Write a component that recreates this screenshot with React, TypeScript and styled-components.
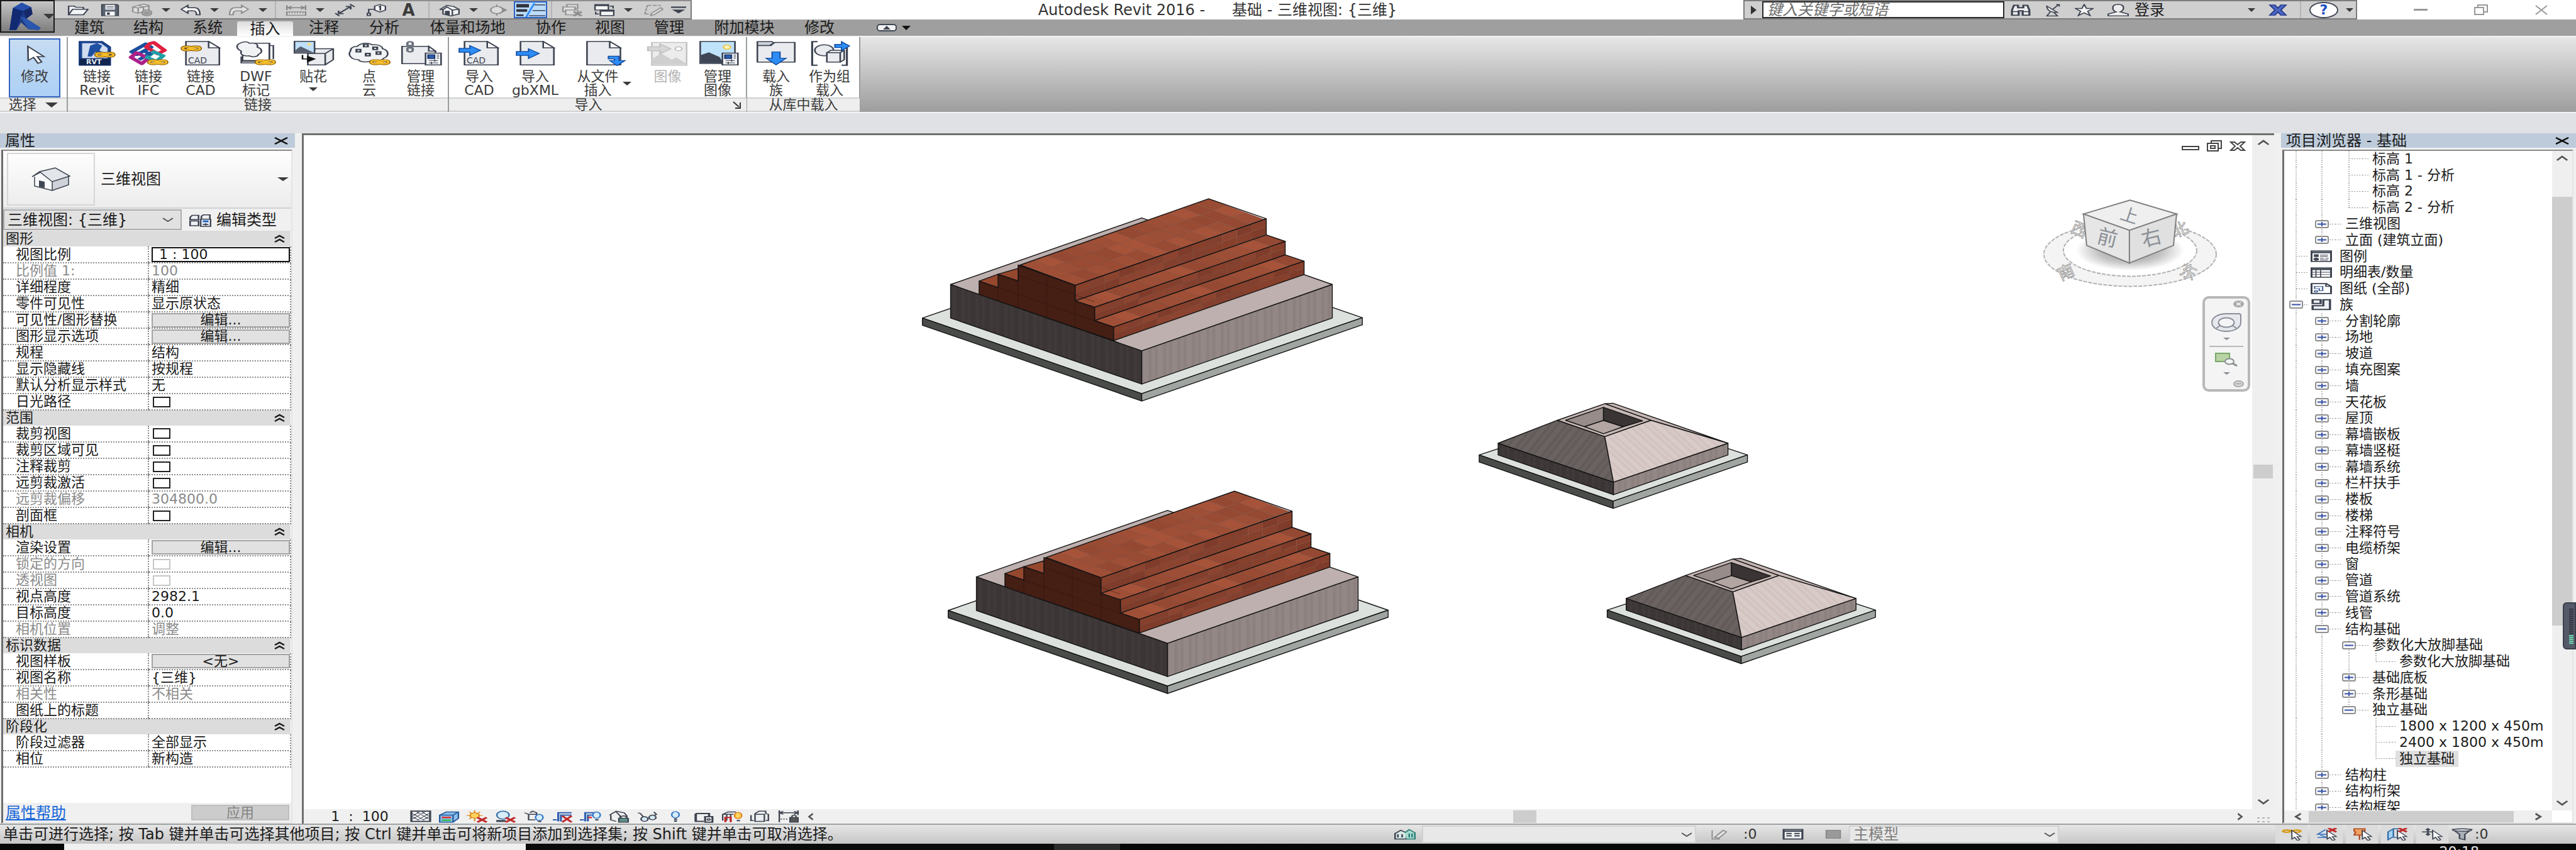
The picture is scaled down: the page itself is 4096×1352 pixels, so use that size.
import React from "react";
import styled, { createGlobalStyle, css } from "styled-components";

const Global = createGlobalStyle`
  * { box-sizing: border-box; }
  html, body { margin: 0; height: 100%; background: #f0f0f0; }
  body, button, input, select {
    font-family: "DejaVu Sans", "Noto Sans CJK SC", sans-serif;
    font-size: 22px;
    line-height: 24px;
    color: #1b1b1b;
  }
  button { border: 0; padding: 0; background: none; }
  svg { display: block; flex: none; }
`;

/* ---------- frame ---------- */

const Window = styled.div`
  display: grid;
  grid-template-rows: auto 121px 34px minmax(0, 1fr) 32px 10px;
  grid-template-columns: minmax(0, 1fr);
  height: 100vh;
  overflow: hidden;
  white-space: nowrap;
`;

const Header = styled.header`
  display: grid;
  grid-template-columns: 87px minmax(0, 1fr);
  grid-template-rows: 31px 26px;
  background: #9f9f9f;
`;

const AppButton = styled.button`
  grid-row: 1 / 3;
  height: 52px;
  display: flex;
  align-items: center;
  justify-content: space-between;
  padding: 0 5px 0 11px;
  border: 2px solid #1a1a1a;
  background: linear-gradient(#c4c4c4, #7d7d7d);
`;

const TitleRow = styled.div`
  display: flex;
  background: #fff;
`;

const QuickBar = styled.div`
  display: flex;
  align-items: stretch;
  flex: none;
  padding: 0 3px 0 11px;
  background: #cfcfcf;
  border-top: 2px solid #8e8e8e;
  border-bottom: 2px solid #7c7c7c;
  border-right: 2px solid #7c7c7c;
`;

const Tool = styled.button<{ $w?: number; $on?: boolean }>`
  display: flex;
  align-items: center;
  justify-content: center;
  flex: none;
  width: ${(p) => p.$w ?? 51}px;
  ${(p) => p.$on && css`background: #bcdcfb; border: 2px solid #2d62c4;`}
`;

const Letter = styled.span`
  font-size: 26px;
  font-weight: 700;
  color: #3b3b3b;
`;

const Divider = styled.span`
  flex: none;
  width: 14px;
  background: linear-gradient(#b4b4b4, #b4b4b4) center / 2px 100% no-repeat;
`;

const Title = styled.h1`
  flex: 1;
  margin: 0;
  display: flex;
  justify-content: center;
  align-items: center;
  gap: 43px;
  font-size: 24px;
  font-weight: 400;
  color: #333;
`;

const InfoBar = styled.div`
  display: flex;
  flex: none;
  background: #cfcfcf;
  border: 2px solid #7c7c7c;
`;

const Search = styled.input`
  width: 385px;
  padding: 0 6px;
  border: 2px solid #2a2a2a;
  background: #fff;
  font-style: italic;
  font-size: 24px;
  line-height: 20px;
  &::placeholder { color: #6d6d6d; opacity: 1; }
`;

const Login = styled.button`
  display: flex;
  align-items: center;
  gap: 9px;
  width: 228px;
  padding-left: 12px;
  font-size: 24px;
`;

const HelpDot = styled.span`
  display: flex;
  align-items: center;
  justify-content: center;
  width: 46px;
  height: 26px;
  border: 2px solid #444a58;
  border-radius: 50%;
  background: #fff;
  color: #1f4fbf;
  font-weight: 700;
`;

const WindowButtons = styled.div`
  display: flex;
  flex: none;
  padding: 0 7px 0 53px;
`;

const Tabs = styled.nav`
  display: flex;
  padding-left: 8px;
`;

const Tab = styled.button<{ $w: number; $on?: boolean }>`
  width: ${(p) => p.$w}px;
  line-height: 24px;
  font-size: 24px;
  ${(p) =>
    p.$on &&
    css`
      margin-top: 3px;
      line-height: 20px;
      background: linear-gradient(#dcdcdc, #fff);
      border-radius: 3px 3px 0 0;
    `}
`;

const TabFold = styled.button`
  display: flex;
  align-items: center;
  gap: 8px;
  margin-left: 44px;
`;

const Pill = styled.span`
  display: flex;
  align-items: center;
  justify-content: center;
  width: 32px;
  height: 12px;
  border: 2px solid #3f4654;
  border-radius: 5px;
  background: #f2f2f2;
`;

/* ---------- ribbon ---------- */

const Ribbon = styled.section`
  display: flex;
  border-top: 2px solid #f4f4f4;
  background: linear-gradient(#e6e6e6, #9d9d9d);
`;

const Panel = styled.div<{ $w: number }>`
  width: ${(p) => p.$w}px;
  display: grid;
  grid-template-rows: 96px 23px;
  flex: none;
  background: #fff;
  border-right: 2px solid #9a9d9d;
`;

const PanelBody = styled.div`
  display: flex;
  padding: 2px 4px 0 5px;
`;

const PanelTitle = styled.div`
  display: flex;
  align-items: center;
  justify-content: center;
  border-top: 2px solid #cfd2d1;
  border-bottom: 2px solid #cfd2d1;
  background: #eeeeee;
  color: #3b3b3b;
  line-height: 20px;
`;

const TitleText = styled.span`
  flex: 1;
  text-align: center;
`;

const Big = styled.button<{ $w: number; $dim?: boolean; $on?: boolean }>`
  width: ${(p) => p.$w}px;
  display: flex;
  flex: none;
  flex-direction: column;
  align-items: center;
  gap: 6px;
  padding-top: 4px;
  line-height: 22px;
  color: ${(p) => (p.$dim ? "#b4b4b4" : "#3b3b3b")};
  ${(p) =>
    p.$on &&
    css`
      margin-left: 9px;
      border: 2px solid #3464c0;
      background: linear-gradient(#c6dcf2, #acd0f5);
      padding-top: 2px;
    `}
`;

const BigLabel = styled.span`
  display: flex;
  flex-direction: column;
  align-items: center;
`;

const WithArrow = styled.span`
  display: flex;
  align-items: center;
  gap: 6px;
`;

const OptionsBar = styled.div`
  background: #dfe1e4;
  border-top: 2px solid #f3f3f3;
`;

/* ---------- work area ---------- */

const Work = styled.main`
  display: grid;
  grid-template-columns: 469px minmax(0, 1fr) 469px;
  gap: 11px;
  min-height: 0;
  background: #f0f0f0;
`;

const Palette = styled.section`
  display: flex;
  flex-direction: column;
  min-height: 0;
  min-width: 0;
`;

const PaletteHead = styled.header`
  display: flex;
  justify-content: space-between;
  align-items: center;
  height: 23px;
  flex: none;
  padding: 0 10px 0 8px;
  background: #bdcbda;
  font-size: 24px;
`;

const PaletteBox = styled.div`
  flex: 1;
  min-height: 0;
  display: flex;
  flex-direction: column;
  margin: 3px 4px 0 2px;
  border: 2px solid #8a8a8a;
  border-left: 3px solid #6c6c6c;
  border-right-color: #e4e4e4;
  border-bottom-color: #e4e4e4;
  background: #fff;
`;

const TypePicker = styled.button`
  display: flex;
  align-items: center;
  flex: none;
  gap: 9px;
  height: 92px;
  padding: 0 4px 0 6px;
  border-bottom: 2px solid #d0d2d4;
  background: linear-gradient(#fefefe, #ececec);
  text-align: left;
`;

const Thumb = styled.span`
  display: flex;
  align-items: center;
  justify-content: center;
  width: 140px;
  height: 84px;
  border: 2px solid #d4d6d8;
`;

const Grow = styled.span`
  flex: 1;
  font-size: 24px;
`;

const FilterRow = styled.div`
  display: flex;
  flex: none;
  height: 35px;
  padding: 1px 0;
  background: #f0f0f0;
`;

const Combo = styled.label<{ $w: number; $plain?: boolean }>`
  display: grid;
  grid-template-columns: minmax(0, 1fr) ${(p) => (p.$plain ? 26 : 40)}px;
  align-items: center;
  flex: none;
  width: ${(p) => p.$w}px;
  border: 2px solid ${(p) => (p.$plain ? "#d2d2d2" : "#acacac")};
  background: ${(p) => (p.$plain ? "#e8e8e8" : "#e1e1e1")};
  svg { grid-area: 1 / 2; justify-self: center; pointer-events: none; }
`;

const Select = styled.select<{ $dim?: boolean }>`
  grid-area: 1 / 1 / 2 / 3;
  width: 100%;
  height: 100%;
  min-width: 0;
  padding: 0 5px;
  border: 0;
  appearance: none;
  background: transparent;
  font-size: 24px;
  line-height: 24px;
  color: ${(p) => (p.$dim ? "#7d7d7d" : "#1b1b1b")};
`;

const EditType = styled.button`
  display: flex;
  align-items: center;
  gap: 8px;
  padding-left: 11px;
  font-size: 24px;
`;

const Props = styled.table`
  width: 100%;
  border-collapse: collapse;
  table-layout: fixed;
`;

const GroupRow = styled.tr`
  height: 25px;
  background: #dcdcdc;
`;

const GroupCell = styled.th`
  padding: 0 9px 0 4px;
  font-weight: 400;
  text-align: left;
  line-height: 24px;
`;

const Between = styled.span`
  display: flex;
  align-items: center;
  justify-content: space-between;
`;

const PropRow = styled.tr<{ $dim?: boolean }>`
  height: 26px;
  color: ${(p) => (p.$dim ? "#8b8b8b" : "#1b1b1b")};
  th, td {
    height: 26px;
    padding: 0;
    border-bottom: 2px dotted #8c8c8c;
    line-height: 22px;
    text-align: left;
    font-weight: 400;
  }
  th { padding-left: 20px; }
  td { border-left: 2px dotted #8c8c8c; border-right: 2px dotted #8c8c8c; padding-left: 4px; }
`;

const CellButton = styled.button`
  display: block;
  width: 100%;
  height: 23px;
  border: 2px solid #a3a3a3;
  background: #e1e1e1;
  line-height: 18px;
`;

const CellInput = styled.input`
  display: block;
  width: 100%;
  height: 24px;
  padding: 0 10px;
  border: 2px solid #111;
  background: #fff;
`;

const Check = styled.input`
  appearance: none;
  display: block;
  width: 28px;
  height: 17px;
  margin: 0 0 0 2px;
  border: 2px solid #222;
  background: #fff;
  &:disabled { border-color: #c6c6c6; }
`;

const PropsFoot = styled.footer`
  display: flex;
  align-items: center;
  justify-content: space-between;
  height: 31px;
  margin-top: auto;
  padding: 0 3px 0 4px;
  background: #f0f0f0;
`;

const HelpLink = styled.a`
  color: #1565d8;
  font-size: 24px;
`;

const Apply = styled.button`
  width: 156px;
  height: 25px;
  border: 2px solid #bfbfbf;
  background: #cccccc;
  color: #838383;
  line-height: 20px;
`;

/* ---------- canvas ---------- */

const View = styled.section`
  display: grid;
  grid-template-rows: minmax(0, 1fr) 23px;
  grid-template-columns: minmax(0, 1fr) 35px;
  border-top: 3px solid #6f6f6f;
  border-left: 3px solid #6f6f6f;
  background: #f0f0f0;
`;

const Stage = styled.div`
  position: relative;
  background: #fff;
  min-height: 0;
`;

const Scene = styled.svg`
  width: 100%;
  height: 100%;
`;

const ViewButtons = styled.div`
  position: absolute;
  top: 8px;
  right: 10px;
  display: flex;
  gap: 12px;
`;

const NavBar = styled.div`
  position: absolute;
  top: 256px;
  right: 3px;
  width: 76px;
  height: 152px;
  display: flex;
  flex-direction: column;
  align-items: center;
  justify-content: space-between;
  padding: 3px 6px;
  border: 4px solid #b8b8b8;
  border-radius: 10px;
  background: #f4f4f4;
`;

const NavEnd = styled.button`
  align-self: flex-end;
`;

const NavRule = styled.span`
  width: 54px;
  height: 2px;
  background: #b8b8b8;
`;

const Track = styled.div<{ $v?: boolean }>`
  display: flex;
  flex-direction: ${(p) => (p.$v ? "column" : "row")};
  align-items: center;
  justify-content: space-between;
  min-width: 0;
  min-height: 0;
  padding: ${(p) => (p.$v ? "7px 0" : "0 14px")};
  background: #efefef;
`;

const Bar = styled.span<{ $w: number; $h: number }>`
  flex: none;
  width: ${(p) => p.$w}px;
  height: ${(p) => p.$h}px;
  background: #cdcdcd;
`;

const Spacer = styled.span<{ $n: number }>`
  flex: ${(p) => p.$n} 0 0;
`;

const ViewBar = styled.div`
  display: flex;
  align-items: center;
  min-width: 0;
`;

const Scale = styled.button`
  width: 163px;
  padding-left: 15px;
  white-space: pre;
`;

const Grip = styled.span`
  align-self: end;
  justify-self: center;
  width: 24px;
  height: 12px;
  background: radial-gradient(#b4b4b4 2px, transparent 2px) 0 0 / 8px 6px;
`;

/* ---------- project browser ---------- */

const BrowserGrid = styled.div`
  flex: 1;
  min-height: 0;
  display: grid;
  grid-template-columns: minmax(0, 1fr) 32px;
  grid-template-rows: minmax(0, 1fr) 19px;
`;

const TreeClip = styled.div`
  overflow: hidden;
  min-height: 0;
`;

const Tree = styled.ul`
  display: grid;
  grid-template-rows: repeat(41, minmax(0, 1fr));
  height: calc(100% + 8px);
  margin: 0;
  padding: 0;
  list-style: none;
`;

const TreeRow = styled.li`
  display: flex;
  align-items: stretch;
  min-width: 0;
`;

const vDots = "repeating-linear-gradient(to bottom, #9a9a9a 0 1px, transparent 1px 3px)";
const hDots = "repeating-linear-gradient(to right, #9a9a9a 0 2px, transparent 2px 4px)";

const Guide = styled.span<{ $kind: string; $first?: boolean }>`
  display: flex;
  flex: none;
  align-items: center;
  justify-content: center;
  width: ${(p) => (p.$first ? 38 : 43)}px;
  background-repeat: no-repeat;
  ${(p) => {
    if (p.$kind === " ") return "";
    const end = "EQN".includes(p.$kind);
    const v = `${vDots} center top / 2px ${end ? "50%" : "100%"} no-repeat`;
    return p.$kind === "L" ? `background: ${v};` : `background: ${v}, ${hDots} right center / 50% 1px no-repeat;`;
  }}
`;

const Toggle = styled.button`
  width: 22px;
  height: 13px;
  display: flex;
  align-items: center;
  justify-content: center;
  border: 2px solid #8e8e8e;
  border-radius: 3px;
  background: #fafafa;
`;

const Stub = styled.span`
  flex: none;
  width: 10px;
  margin-right: 6px;
  background: ${hDots} left center / 100% 1px no-repeat;
`;

const TreeIcon = styled.span`
  display: flex;
  align-items: center;
  margin: 0 12px 0 4px;
`;

const TreeText = styled.span<{ $on?: boolean }>`
  display: flex;
  align-items: center;
  min-width: 0;
  ${(p) => p.$on && css`background: #dfdfdf; padding: 0 6px; margin-left: -6px;`}
`;

const SideMeter = styled.div`
  position: fixed;
  right: 0;
  top: 958px;
  width: 21px;
  height: 75px;
  padding: 8px 2px 7px 8px;
  border-radius: 6px 0 0 6px;
  border: 2px solid #3b3f4b;
  background: #555a69;
`;

const Meter = styled.div`
  height: 100%;
  background: linear-gradient(transparent 75%, #6fd6b0 75%), #343844;
  mask: repeating-linear-gradient(#000 0 2px, transparent 2px 3px);
`;

/* ---------- status ---------- */

const Status = styled.footer`
  display: grid;
  grid-template-columns: 2206px minmax(0, 1fr) 478px;
  align-items: stretch;
  border-top: 2px solid #a0a3a3;
  background: linear-gradient(#e6e6e6, #c6c6c6);
`;

const Hint = styled.span`
  padding-left: 5px;
  font-size: 24px;
  line-height: 30px;
`;

const Cluster = styled.div`
  display: flex;
  align-items: center;
  min-width: 0;
`;

const Shelf = styled.div`
  display: flex;
  height: 28px;
`;

const PickButton = styled.button`
  display: flex;
  align-items: center;
  justify-content: center;
  align-self: stretch;
  width: 51px;
  margin-right: 5px;
  background: #dcdcdc;
`;

const Count = styled.span`
  width: 40px;
  margin-left: 3px;
  color: #333;
`;

const Taskbar = styled.div`
  display: flex;
  overflow: hidden;
  background: #070707;
`;

const TaskGap = styled.span<{ $w: number; $c: string }>`
  flex: none;
  width: ${(p) => p.$w}px;
  background: ${(p) => p.$c};
`;

const Clock = styled.time`
  margin-left: auto;
  padding: 3px 154px 0 0;
  color: #e8e8e8;
  line-height: 20px;
`;

/* ---------- icons ---------- */

const INK = "#3d4350";

type Kids = { children?: React.ReactNode };

const I16 = ({ children, w = 34, h = 20 }: Kids & { w?: number; h?: number }) => (
  <svg width={w} height={h} viewBox="0 0 16 16" preserveAspectRatio="none" fill="none" stroke={INK} strokeWidth="1.1">
    {children}
  </svg>
);

const I32 = ({ children, text }: Kids & { text?: React.ReactNode }) => (
  <svg width="68" height="40" viewBox="0 0 68 40">
    <g transform="scale(2.125 1.25)" fill="none" stroke={INK} strokeWidth="1.2">{children}</g>
    {text}
  </svg>
);

const Caret = ({ w = 14, h = 6, c = "#3b3b3b" }) => (
  <svg width={w} height={h} viewBox="0 0 10 6" preserveAspectRatio="none"><path d="M0 0h10L5 6z" fill={c} /></svg>
);

const Chev = ({ d, w = 22, h = 10 }: { d: string; w?: number; h?: number }) => {
  const paths: Record<string, string> = {
    up: "M2 8L8 2l6 6", down: "M2 2l6 6 6-6", left: "M11 1L4 5l7 4", right: "M5 1l7 4-7 4",
  };
  return <svg width={w} height={h} viewBox="0 0 16 10" preserveAspectRatio="none"><path d={paths[d]} fill="none" stroke="#555" strokeWidth="2.4" /></svg>;
};

const ThinDown = () => (
  <svg width="18" height="7" viewBox="0 0 18 7"><path d="M1 1l8 5 8-5" fill="none" stroke="#555" strokeWidth="2" /></svg>
);

const Fold = () => (
  <svg width="17" height="14" viewBox="0 0 17 14"><path d="M1 6l7.500-4L16 6M1 12l7.500-4 7.500 4" fill="none" stroke="#1b1b1b" strokeWidth="2.500" /></svg>
);

const Cross = ({ w = 24, h = 12, c = "#111", s = 2.5 }) => (
  <svg width={w} height={h} viewBox={`0 0 ${w} ${h}`}><path d={`M2 1L${w - 2} ${h - 1}M${w - 2} 1L2 ${h - 1}`} stroke={c} strokeWidth={s} /></svg>
);

const Chain = ({ x, y }: { x: number; y: number }) => (
  <g transform={`translate(${x} ${y})`} fill="none">
    <g stroke="#8a5a06" strokeWidth="3.2"><rect x="1.6" y="1.6" width="6.4" height="4" rx="2" /><rect x="8" y="1.6" width="6.4" height="4" rx="2" /></g>
    <g stroke="#f7c02b" strokeWidth="1.7"><rect x="1.6" y="1.6" width="6.4" height="4" rx="2" /><rect x="8" y="1.6" width="6.4" height="4" rx="2" /><path d="M5 3.6h6" /></g>
  </g>
);

const Page = ({ x = 3, w = 26 }) => (
  <>
    <path d={`M${x} .8h${w - 8}l8 8V30.6h-${w}z`} fill="#e9ebef" />
    <path d={`M${x + w - 8} .8v8h8z`} fill="#fff" />
  </>
);

const Blue = ({ d }: { d: string }) => <path d={d} fill="#2d8cf5" stroke="#124a9c" strokeWidth=".9" />;

const Sheet = ({ x = 17, y = 15 }) => (
  <g transform={`translate(${x} ${y})`}>
    <rect x=".6" y=".6" width="11.6" height="15" fill="#f4f6f8" />
    <rect x="2.5" y="2.8" width="4.8" height="4.6" fill="#2b5fae" stroke="#1d3a6e" />
    <path d="M9 3h1.8M9 5h1.8M9 7h1.8M3 10h7M3 13h7M7.5 8.8v2.6M5 11.8v2.6" strokeWidth=".9" />
  </g>
);

const logo = (
  <svg width="56" height="46" viewBox="0 0 52 38" preserveAspectRatio="none">
    <path d="M2 37L7 8 20 1l14 6 2 9-9 6 21 12-3 3-15-1-11-9-7 10z" fill="#1c3a86" />
    <path d="M7 8l13-7 14 6-12 5z" fill="#274fae" /><path d="M22 12l12-5 2 9-9 6z" fill="#15296a" />
    <path d="M18 19l9 3 21 12-3 3-15-1z" fill="#2a57ad" /><path d="M2 37L7 8l15 4-4 9-6 16z" fill="#122a72" />
  </svg>
);

const icon = {
  open: <I16><path d="M1 14V3h4l1.500 1.500H12V7M1 14l3-7h11.500l-3.500 7z" fill="#f2f3f5" /></I16>,
  save: <I16 w={30}><path d="M1 1h13l1 1v13H1z" fill="#5b6270" /><rect x="4" y="1.500" width="8" height="6" fill="#eef0f3" stroke="none" /><path d="M5 3.500h6M5 5.500h6" strokeWidth=".700" /><rect x="4" y="10" width="8" height="5" fill="#fff" stroke="none" /><rect x="5.400" y="11" width="2.400" height="3" fill={INK} stroke="none" /></I16>,
  sync: <I16><g stroke="#8f8f8f" fill="#dedede"><path d="M1 4l4-2 4 2v6l-4 2-4-2zM5 2l4-1.500L13 2v6M1 4l4 1.500L9 4M5 5.500V12M9 4l4-1" /><ellipse cx="11.500" cy="11.500" rx="3.600" ry="3.800" fill="#a9a9a9" /><path d="M9.500 11h4M9.500 13h4" /></g></I16>,
  undo: <I16><path d="M1 7l5-5v3h5q4 0 4 9h-2.600Q12.500 9 10 9H6v3z" fill="#f6f6f6" /></I16>,
  redo: <I16><path d="M15 7l-5-5v3H5q-4 0-4 9h2.600Q3.500 9 6 9h4v3z" fill="#e2e2e2" stroke="#8d8d8d" /></I16>,
  measure: <I16><g stroke="#858585"><path d="M1 2v6M15 2v6M2 5h12M4.500 3L2 5l2.500 2M11.500 3L14 5l-2.500 2" /><rect x="1" y="10.500" width="14" height="4" fill="#e2e2e2" /><path d="M3 11v2M5 11v2M7 11v2M9 11v2M11 11v2M13 11v2" strokeWidth=".600" /></g></I16>,
  align: <I16><path d="M3.500 12.500l9-9M3.500 8.800v3.700h3.700M8.800 3.500h3.700v3.700M1 12l3 3.500M12 .500L15.500 4" strokeWidth="1.300" /></I16>,
  tag: <I16><path d="M10.500 1l4 2v5l-4 2.500-4-2.500V3z" fill="#fafafa" /><path d="M9.500 4l1.200-1v5.500" strokeWidth="1.300" /><path d="M6.500 7H2v5" /><rect x="1" y="12" width="2.200" height="3" /></I16>,
  house: <I16><path d="M1 7l5-5 5 1.500L15 7v6l-6 2.500L3 13V7.500z" fill="#f1f2f4" /><path d="M1 7l2 .500L6 4l4 4v7M15 7l-5 1" /><path d="M5 9.500h2.500V14L5 13z" fill={INK} /></I16>,
  section: <I16><path d="M7 1v14" stroke="#8b8b8b" /><path d="M9 3l6 5-6 5z" fill="#8b8b8b" stroke="none" /><ellipse cx="7" cy="8" rx="4.500" ry="4.500" fill="#dcdcdc" stroke="#8b8b8b" /></I16>,
  thin: <I16 w={46} h={22}><g stroke="none" fill="#2f343e"><rect x="0" y="1" width="7" height="4" /><rect x="0" y="7" width="6" height="3" /><rect x="0" y="13" width="4" height="2" /></g><path d="M10 2h6M9 8.500h7M7 14.500h9" /><path d="M10 0L5.500 16" stroke="#2d8cf5" /></I16>,
  closeHidden: <I16><g stroke="#8f8f8f" fill="#dcdcdc"><rect x="4" y="1" width="8" height="5" /><rect x="1" y="4" width="9" height="6" /><rect x="3" y="8" width="9" height="6" /><path d="M9 10l6 5.500M15 10l-6 5.500" strokeWidth="2" /></g></I16>,
  swap: <I16><rect x="1" y="1" width="10" height="7" fill="#f5f5f5" /><path d="M1 2h10" strokeWidth="2" /><rect x="5" y="8" width="10" height="7" fill="#f5f5f5" /><path d="M5 9h10" strokeWidth="2" /><path d="M12 3h2.500v3M1.500 10v3H4" /></I16>,
  sketch: <I16><g stroke="#8f8f8f"><path d="M4 2h10M4 2L2 13M2 13h4" strokeDasharray="3 1" /><path d="M14 5l1.500 2-6.500 7-2.500 1 .500-3z" fill="#ddd" /></g></I16>,
  custom: <I16 w={24} h={12}><path d="M0 2h16" strokeWidth="3" /><path d="M1 7h14l-7 8z" fill={INK} stroke="none" /></I16>,
  binoc: <I16><path d="M3 2h3v3h4V2h3l1.500 6v6.500h-5V9h-3v5.500h-5V8z" fill="#eee" strokeWidth="1.500" /><path d="M1.500 10h5M9.500 10h5" /></I16>,
  dish: <I16 w={30}><path d="M3 3q0 8 9 8z" fill="#eee" /><path d="M8 7l5-6M11 1h2.500v2.500M6 10l-3 5.500h9L9 11" /></I16>,
  star: <I16 w={30}><path d="M8 1l2 5h5.500L11 9.500 13 15l-5-3.500L3 15l2-5.500L.500 6H6z" fill="#f4f4f4" /></I16>,
  user: <I16><path d="M8 .800c3 0 4 2 4 4.500s-1.500 4.500-2.500 5l6 2.700v2.300H.500V13l6-2.700C5.500 9.800 4 8 4 5.300S5 .800 8 .800z" fill="#eee" /></I16>,
  x: <I16 w={30}><path d="M1 1.500h4.500L8 5.500l2.500-4H15L10.500 8l4.500 6.500h-4.500L8 10.500l-2.500 4H1L5.500 8z" fill="#4a68c4" stroke="#26388a" /></I16>,
  ctl: (
    <I16 w={36} h={22}>
      <path d="M1 5l1.500-2.500H7V7.500H1zM9 3.500L10.500 2H15v6H9zM1 9h6v5.500H1z" fill="#eef0f3" />
      <rect x="8.500" y="7" width="7" height="8.300" fill="#eef3f9" /><path d="M10 9.500h4" stroke="#1d63c0" strokeWidth="2.200" /><path d="M10 13h4M12 11.800v2.400" />
    </I16>
  ),
  legend: <I16 w={34} h={19}><rect x=".700" y="1" width="14.600" height="14" fill="#fff" strokeWidth="1.400" /><path d="M1 3h14" strokeWidth="2" /><rect x="3" y="6" width="2.500" height="2.500" fill={INK} /><ellipse cx="4.200" cy="12" rx="1.500" ry="1.500" fill={INK} /><path d="M7 6.500h6M7 8.500h6M7 11h3M11 11h2.500M7 13h6" strokeWidth=".800" /></I16>,
  sched: <I16 w={34} h={17}><rect x=".700" y="1" width="14.600" height="14" fill="#fff" strokeWidth="1.400" /><path d="M1 3h14" strokeWidth="2.500" /><path d="M4 4v11M7.500 4v11M1 7.500h14M1 11h14" strokeWidth=".800" /></I16>,
  sheet: <I16 w={34} h={18}><path d="M.700 1h11L15.300 5v10H.700z" fill="#fff" strokeWidth="1.400" /><path d="M11.500 1v4h4" /><path d="M3 5h6v6H6.500V8H3zM3 11h2v2H3z" stroke="#53719c" /></I16>,
  family: <I16 w={34} h={19}><path d="M1.500 1.500h6v5h-6zM9.500 1.500h5v13h-13v-5h8z" fill="#eef0f5" strokeWidth="1.600" /></I16>,
};

const ribbonIcon = {
  arrow: (
    <I32><path d="M11 7l.200 18 4-4 3.300 7.500 2.800-1.600-3.300-7h5z" fill="#fff" /></I32>
  ),
  rvt: (
    <I32 text={<text x="17" y="37" fontSize="11" fontWeight="700" fill="#e6ebf5" fontFamily="DejaVu Sans">RVT</text>}>
      <path d="M3 .800h17l6 7V31H3z" fill="#1d4796" stroke="#183c80" /><path d="M5 3h14l5 6v13H5z" fill="#cfdcef" stroke="none" />
      <path d="M9 20l2-14 5-3 4 3-2 6 4 5-3 1-4-4-3 6z" fill="#1f4fa3" stroke="none" /><path d="M3 22.500h23V31H3z" fill="#10264f" stroke="none" /><Chain x={14} y={14} />
    </I32>
  ),
  ifc: (
    <I32>
      <g strokeWidth="3.600" strokeLinejoin="round">
        <path d="M20 13l-6 6-5 5" stroke="#1d4f9e" /><path d="M14 4L3.500 14l4 3.500L18 8z" stroke="#1d4f9e" /><path d="M17 3.500l3-1.500 8 10-5 4.500L14.500 8z" stroke="#e02040" />
        <path d="M7 15l9 7-5 7-8-8z" stroke="#ad2088" /><path d="M20 14l7 5-5 7-7-5z" stroke="#1f9fa6" /><path d="M13 13l5 5" stroke="#1d4f9e" />
      </g><Chain x={15} y={23.500} />
    </I32>
  ),
  cad: (
    <I32 text={<text x="14" y="36" fontSize="14" fill={INK} fontFamily="DejaVu Sans">CAD</text>}><Page x={5} w={25} /><Chain x={1} y={6} /></I32>
  ),
  dwf: (
    <I32><path d="M26 6h3v17M5 20v8h14M14 3h12v23H5" /><path d="M9 3h17v22H6V8z" fill="#fff" /><path d="M4 3c3-3 6-2 7 0 4-1 7 1 6 5 4 2 4 7 1 9-1 4-5 4-7 2-5 1-7-2-6-6-4-3-4-8-1-10z" fill="#f1f2f4" /><Chain x={15} y={23.500} /></I32>
  ),
  decal: (
    <I32><path d="M12 16l6-6h13v14l-6 6.500H12z" fill="#e9ebef" /><path d="M12 16h13v14.500M25 16l6-6" /><rect x="2" y=".600" width="15" height="15" fill="#bfe0f8" /><path d="M2.500 15v-3l4-5 10 8z" fill="#59616f" stroke="none" /><circle cx="13" cy="4.500" r="1.500" fill="#ffe27a" stroke="none" /><path d="M8 18v5h6" stroke="#111" /><path d="M12 20l5 3-5 3.500z" fill="#111" stroke="#111" /></I32>
  ),
  cloud: (
    <I32><path d="M7 7c3-5 9-5 11-2 5-1 8 2 8 5 5 2 5 9 1 12-2 4-6 5-9 3-3 3-9 2-10-1C2 24 0 17 2 13c0-4 2-6 5-6z" fill="#f1f2f4" /><path d="M12 4.500h3v3h-3zM19 8h3v3h-3zM6.500 11h3v3h-3zM13.500 16h3v3h-3zM21.500 14h3v3h-3z" strokeWidth="1.500" /><Chain x={16} y={23.500} /></I32>
  ),
  manage: (
    <I32><path d="M2 7h20l5 6v16H2z" fill="#e9ebef" /><path d="M22 7v6h5z" fill="#fff" /><g stroke="#6a707c" strokeWidth="1.800"><rect x="6" y="1" width="4" height="6" rx="2" /><rect x="6" y="8" width="4" height="6" rx="2" /><path d="M8 5v5" /></g><Sheet x={19} y={15} /></I32>
  ),
  importCad: (
    <I32 text={<text x="14" y="36" fontSize="14" fill={INK} fontFamily="DejaVu Sans">CAD</text>}><Page x={5} w={25} /><Blue d="M1 9.500h8V6l8 6-8 6.500v-4H1z" /></I32>
  ),
  gbxml: <I32><Page x={5} w={25} /><Blue d="M2 13.500h9V10l8 6-8 6.500v-4H2z" /></I32>,
  file: <I32><Page x={3} w={25} /><Blue d="M19 19.500h8v5.500h4.500L25.500 31.500 20 25h3.500v-2H19z" /></I32>,
  image: <I32><g stroke="#c2c2c2"><rect x="4" y="2" width="26" height="29" fill="#ececec" /><path d="M4 30V23l7-7 8 8 3-3 8 8v1z" fill="#cfcfcf" stroke="none" /><circle cx="24" cy="10" r="2.500" fill="#fff" /><path d="M1 7.500h9V4l8 6-8 6.500v-4H1z" fill="#d6d6d6" /></g></I32>,
  manageImg: <I32><rect x="3" y=".800" width="26" height="28" fill="#bfe3fb" /><path d="M3.500 28V18l6-3.500 8 6 3 8z" fill="#3e4656" stroke="none" /><circle cx="23" cy="8" r="2.600" fill="#fff7c0" stroke="#f0c84a" /><Sheet x={19} y={15} /></I32>,
  family: <I32><path d="M2 6V1h11l2 3h-2l-2 2z" fill="#cfd3da" /><path d="M2 6h10l3-4h15v25H2z" fill="#e9ebef" /><Blue d="M13 14h6v8h4.500L16 30.500 8.500 22H13z" /></I32>,
  group: <I32><path d="M7 1H3v30h4M25 31h4V6" strokeWidth="1.500" /><circle cx="12" cy="12" r="7" fill="#e9ebef" /><path d="M14 15l3-3h10v12l-3 3H14z" fill="#e9ebef" /><path d="M14 15h10v12M24 15l3-3" /><Blue d="M20 4.500h5V1l6 5.500-6 6v-4h-5z" /></I32>,
};

const viewIcons: [string, React.ReactNode][] = [
  ["详细程度", <><rect x="1" y="1" width="14" height="13" fill="#fff" strokeWidth="1.600" /><path d="M2 4l9 9M2 8l5 5M5 2l9 9M9 2l5 5M14 4l-9 9M14 8l-5 5M11 2l-9 9M7 2L2 7" strokeWidth=".800" /></>],
  ["视觉样式", <><path d="M1 6l5-4h9v8l-4 5H1z" fill="#8fc1ee" stroke="#245a9c" /><path d="M1 6h10v9M11 6l4-4" stroke="#245a9c" /><path d="M2.500 9h7" stroke="#e03030" strokeWidth="2" /><path d="M2.500 12.500h7" stroke="#30c050" strokeWidth="2" /></>],
  ["关闭日光路径", <><path d="M6 0v14M0 6.500h12M2 2l8 9M10 2l-8 9" stroke="#e0912b" /><circle cx="6" cy="6.500" r="3.400" fill="#ffd45e" stroke="#d98a1c" /><path d="M8 9l7 6M15 9l-7 6" stroke="#c02a2a" strokeWidth="2" /></>],
  ["关闭阴影", <><ellipse cx="6" cy="6" rx="4.600" ry="5" fill="#d8ecfa" stroke="#2f6da8" /><path d="M1 13.500h7" strokeWidth="2.500" /><path d="M8 9l7 6M15 9l-7 6" stroke="#c02a2a" strokeWidth="2" /></>],
  ["显示渲染对话框", <><path d="M1 3l3 2v7h5M4 5h6M5 3l2-2 3 2v3" fill="#eee" /><ellipse cx="12" cy="9" rx="2.800" ry="4" fill="#d8ecfa" stroke="#2f78c8" /><path d="M11 14h2.500" strokeWidth="1.600" /></>],
  ["裁剪视图", <><path d="M1 12h3M5 14V3h10M7 14V6h8" stroke="#2f5fb0" strokeWidth="1.500" /><path d="M8 7l7 8M15 7l-7 8" stroke="#c02a2a" strokeWidth="2" /></>],
  ["显示裁剪区域", <><path d="M0 12h3M4 14V3h7M6 14V6h4" stroke="#2f5fb0" strokeWidth="1.500" /><path d="M6 9h3" stroke="#d03030" strokeWidth="2" /><ellipse cx="12.500" cy="6" rx="2.800" ry="4" fill="#d8ecfa" stroke="#2f78c8" /><path d="M11.500 12h2.500" strokeWidth="1.600" /></>],
  ["锁定三维视图", <><path d="M1 6l5-5 6 2 2 4v4M2 6v6l4 2M6 2l3 5v3" fill="#eee" /><rect x="8" y="10" width="7" height="5" fill="#5d9088" /><path d="M9.500 10V8q2-2 4 0v1" /></>],
  ["临时隐藏", <><path d="M1 3l2 1 3 6M13 2l2 3-4 3" /><ellipse cx="6" cy="11" rx="2.600" ry="3" fill="#d4e8f4" /><ellipse cx="12" cy="9" rx="2.600" ry="3" fill="#d4e8f4" /></>],
  ["显示隐藏的图元", <><ellipse cx="8" cy="5.500" rx="2.800" ry="4" fill="#d8ecfa" stroke="#2f78c8" /><path d="M7 11h2.200M7 13.500h2.200" strokeWidth="1.800" /></>],
  ["临时视图属性", <><path d="M2 4h10v4M2 4v10h6M1 6h2M1 9h2M1 12h2" strokeWidth="1.600" /><rect x="9" y="8" width="5.500" height="7" fill="#eee" strokeWidth="1.500" /><circle cx="11.700" cy="11.500" r="1" /></>],
  ["显示分析模型", <><path d="M1 13V5l4-3h6M1 5h8M4 5v8M7 5v8" /><path d="M3 15V9h4v6" stroke="#c02a2a" strokeWidth="1.600" /><ellipse cx="12.500" cy="6.500" rx="2.700" ry="4" fill="#ffd45e" stroke="#e0801c" /><path d="M11.500 13h2.500" strokeWidth="1.600" /></>],
  ["高亮显示位移集", <><path d="M4 4l3-3h5v3M4 4v10h7V5H4M1 6v7h2M12 4l2 1v8h-2" fill="#eceef0" /></>],
  ["显示约束", <><path d="M1 0v15M15 0v6M1 3h14M4 1L1 3l3 2M12 1l3 2-3 2" /><path d="M2 11h5" strokeDasharray="1 1" /><rect x="9" y="9" width="6" height="6" fill="#555" /><path d="M10.500 9V7q1.500-2 3 0v2" /></>],
];

/* ---------- scene drawing ---------- */

type Pt = [number, number];

const poly = (pts: Pt[]) => pts.map((p) => p.join(",")).join(" ");

const Face = ({ p, fill, line = true }: { p: Pt[]; fill: string; line?: boolean }) => (
  <polygon points={poly(p)} fill={fill} stroke={line ? "#141414" : "none"} strokeWidth="1.400" vectorEffect="non-scaling-stroke" strokeLinejoin="round" />
);

/* A parallelogram split into courses whose tone varies from cell to cell. */
const Bricks = ({ p, nu, nv, tones }: { p: [Pt, Pt, Pt, Pt]; nu: number; nv: number; tones: string[] }) => {
  const [a, b, , d] = p;
  const at = (u: number, v: number): Pt => [
    a[0] + (b[0] - a[0]) * u + (d[0] - a[0]) * v,
    a[1] + (b[1] - a[1]) * u + (d[1] - a[1]) * v,
  ];
  const cells: React.ReactNode[] = [];
  for (let i = 0; i < nu; i++)
    for (let j = 0; j < nv; j++)
      cells.push(
        <polygon
          key={`${i}-${j}`}
          points={poly([at(i / nu, j / nv), at((i + 1) / nu, j / nv), at((i + 1) / nu, (j + 1) / nv), at(i / nu, (j + 1) / nv)])}
          fill={tones[(i * 7 + j * 5 + ((i * j) % 3)) % tones.length]}
          stroke="#6e4030"
          strokeOpacity=".300"
          strokeWidth="1"
          vectorEffect="non-scaling-stroke"
        />,
      );
  return (<g>{cells}<Face p={p} fill="none" /></g>);
};

const TOP = ["#a04f37", "#994b34", "#a6533a", "#9c4e36", "#954933"];
const RISER = ["#87402c", "#803c2a", "#8c4430", "#84402e"];

const Stepped = () => (
  <g>
    <Face p={[[46, 838], [781, 344], [1512, 836], [777, 1330]]} fill="#dce1de" />
    <Face p={[[46, 838], [777, 1330], [777, 1378], [46, 885]]} fill="#4a4c4a" />
    <Face p={[[777, 1330], [1512, 836], [1512, 882], [777, 1378]]} fill="#a0a5a2" />
    <Face p={[[140, 620], [777, 187], [1412, 620], [777, 1052]]} fill="#bdb0ae" />
    <Face p={[[140, 620], [777, 1052], [777, 1268], [140, 838]]} fill="url(#dark)" />
    <Face p={[[777, 1052], [1412, 620], [1412, 838], [777, 1268]]} fill="url(#mid)" />
    <Face p={[[235, 598], [298, 553], [365, 597], [298, 640]]} fill="#96482f" />
    <Face p={[[298, 553], [365, 515], [365, 597]]} fill="#96482f" />
    <Bricks p={[[555, 625], [1192, 192], [1192, 297], [555, 727]]} nu={13} nv={2} tones={RISER} />
    <Bricks p={[[555, 727], [1192, 297], [1255, 340], [620, 768]]} nu={13} nv={1} tones={TOP} />
    <Bricks p={[[620, 768], [1255, 340], [1255, 427], [620, 855]]} nu={13} nv={2} tones={RISER} />
    <Bricks p={[[620, 855], [1255, 427], [1318, 468], [683, 897]]} nu={13} nv={1} tones={TOP} />
    <Bricks p={[[683, 897], [1318, 468], [1318, 555], [683, 985]]} nu={13} nv={2} tones={RISER} />
    <Bricks p={[[372, 493], [1000, 62], [1192, 192], [555, 625]]} nu={14} nv={3} tones={TOP} />
    <Face
      p={[[235, 598], [298, 640], [298, 553], [365, 597], [365, 493], [555, 625], [555, 727], [620, 768], [620, 855], [683, 897], [683, 985], [235, 685]]}
      fill="#451e14"
    />
    <path d="M298 640v88M365 597v176M460 560v275M555 727v172M298 640l385 258M365 560l255 172" stroke="#2c130c" strokeOpacity=".500" fill="none" vectorEffect="non-scaling-stroke" />
  </g>
);

const Tapered = () => (
  <g>
    <Face p={[[46, 350], [541, 105], [1037, 350], [541, 608]]} fill="#dce1de" />
    <Face p={[[46, 350], [541, 608], [541, 648], [46, 390]]} fill="#4a4c4a" />
    <Face p={[[541, 608], [1037, 350], [1037, 390], [541, 648]]} fill="#a0a5a2" />
    <Face p={[[116, 285], [542, 502], [542, 572], [116, 350]]} fill="url(#dark)" />
    <Face p={[[542, 502], [965, 285], [965, 350], [542, 572]]} fill="url(#mid)" />
    <Face p={[[510, 65], [540, 62], [965, 285], [680, 157]]} fill="#c6b7b4" />
    <Face p={[[335, 157], [510, 248], [542, 502], [116, 285]]} fill="url(#slopeDark)" />
    <Face p={[[680, 157], [965, 285], [542, 502], [510, 248]]} fill="url(#slopeLight)" />
    <Face p={[[335, 157], [510, 65], [680, 157], [510, 248]]} fill="#c6b7b4" />
    <Face p={[[365, 157], [505, 85], [505, 158], [435, 193]]} fill="#988c8a" />
    <Face p={[[505, 85], [650, 160], [578, 193], [505, 158]]} fill="#3a3534" />
    <Face p={[[435, 193], [505, 158], [578, 193], [505, 232]]} fill="#b3a5a2" />
  </g>
);

const Cube = () => (
  <g>
    <ellipse cx="3386" cy="404" rx="137" ry="51" fill="#f4f4f4" stroke="#b2b2b2" strokeWidth="2" strokeDasharray="6 2" />
    <ellipse cx="3386" cy="398" rx="106" ry="41" fill="#fff" stroke="#b2b2b2" strokeWidth="2" strokeDasharray="6 2" />
    <ellipse cx="3386" cy="398" rx="86" ry="32" fill="url(#shade)" />
    <g fill="#f6f6f6" stroke="#9a9a9a" strokeWidth="1" fontFamily="Noto Sans CJK SC" fontSize="26">
      <text x="3271" y="442" transform="rotate(-24 3284 432)">南</text>
      <text x="3466" y="442" transform="rotate(24 3480 432)">东</text>
      <text x="3293" y="374" transform="rotate(24 3306 364)">西</text>
      <text x="3452" y="374" transform="rotate(-24 3465 364)">北</text>
    </g>
    <g stroke="#808080" strokeWidth="2">
      <polygon points="3312,340 3386,318 3460,340 3385,366" fill="#efefef" />
      <polygon points="3312,340 3385,366 3385,418 3317,390" fill="#e6e6e6" />
      <polygon points="3385,366 3460,340 3455,390 3385,418" fill="#e0e0e0" />
    </g>
    <g fill="#8b9097" fontFamily="Noto Sans CJK SC" fontSize="32">
      <text x="3371" y="352" fontSize="28" transform="rotate(18 3384 342)">上</text>
      <text x="3334" y="389" transform="rotate(14 3350 378)">前</text>
      <text x="3404" y="389" transform="rotate(-14 3419 378)">右</text>
    </g>
  </g>
);

/* Soft concrete streaks that repeat across a face. */
const Grain = ({ id, base, streak, w, t }: { id: string; base: string; streak: string; w: number; t?: string }) => (
  <linearGradient id={id} gradientUnits="userSpaceOnUse" x1="0" y1="0" x2={w} y2="0" spreadMethod="repeat" gradientTransform={t}>
    <stop offset="0" stopColor={base} />
    <stop offset=".200" stopColor={streak} />
    <stop offset=".350" stopColor={base} />
    <stop offset=".600" stopColor={base} />
    <stop offset=".750" stopColor={streak} />
    <stop offset="1" stopColor={base} />
  </linearGradient>
);

const Drawing = () => (
  <Scene viewBox="483 215 3097 1071" preserveAspectRatio="xMidYMid meet" role="img" aria-label="三维视图">
    <defs>
      <Grain id="dark" base="#3b3635" streak="#413c3b" w={48} />
      <Grain id="mid" base="#938886" streak="#8a7f7d" w={48} />
      <Grain id="slopeDark" base="#6b6361" streak="#605957" w={60} t="skewX(-28)" />
      <Grain id="slopeLight" base="#d9cbc8" streak="#d0c1be" w={60} t="skewX(36)" />
      <radialGradient id="shade"><stop offset="0" stopColor="#8a8a8a" /><stop offset=".600" stopColor="#c4c4c4" /><stop offset="1" stopColor="#fff" /></radialGradient>
    </defs>
    <g transform="translate(1444.400 300.600) scale(.4770 .2444)"><Stepped /></g>
    <g transform="translate(1485.400 765.600) scale(.4770 .2444)"><Stepped /></g>
    <g transform="translate(2331.600 623.200) scale(.4303 .2853)"><Tapered /></g>
    <g transform="translate(2535.100 870) scale(.4303 .2853)"><Tapered /></g>
    <Cube />
  </Scene>
);

/* ---------- data ---------- */

const tabs: [string, number][] = [
  ["建筑", 94], ["结构", 94], ["系统", 94], ["插入", 89], ["注释", 98], ["分析", 94], ["体量和场地", 171],
  ["协作", 94], ["视图", 94], ["管理", 94], ["附加模块", 145], ["修改", 94],
];

type Prop = { name: string; value?: string; kind?: "button" | "check" | "input"; dim?: boolean };

const groups: { title: string; rows: Prop[] }[] = [
  {
    title: "图形",
    rows: [
      { name: "视图比例", value: "1 : 100", kind: "input" },
      { name: "比例值 1:", value: "100", dim: true },
      { name: "详细程度", value: "精细" },
      { name: "零件可见性", value: "显示原状态" },
      { name: "可见性/图形替换", value: "编辑...", kind: "button" },
      { name: "图形显示选项", value: "编辑...", kind: "button" },
      { name: "规程", value: "结构" },
      { name: "显示隐藏线", value: "按规程" },
      { name: "默认分析显示样式", value: "无" },
      { name: "日光路径", kind: "check" },
    ],
  },
  {
    title: "范围",
    rows: [
      { name: "裁剪视图", kind: "check" },
      { name: "裁剪区域可见", kind: "check" },
      { name: "注释裁剪", kind: "check" },
      { name: "远剪裁激活", kind: "check" },
      { name: "远剪裁偏移", value: "304800.0", dim: true },
      { name: "剖面框", kind: "check" },
    ],
  },
  {
    title: "相机",
    rows: [
      { name: "渲染设置", value: "编辑...", kind: "button" },
      { name: "锁定的方向", kind: "check", dim: true },
      { name: "透视图", kind: "check", dim: true },
      { name: "视点高度", value: "2982.1" },
      { name: "目标高度", value: "0.0" },
      { name: "相机位置", value: "调整", dim: true },
    ],
  },
  {
    title: "标识数据",
    rows: [
      { name: "视图样板", value: "<无>", kind: "button" },
      { name: "视图名称", value: "{三维}" },
      { name: "相关性", value: "不相关", dim: true },
      { name: "图纸上的标题", value: "" },
    ],
  },
  {
    title: "阶段化",
    rows: [
      { name: "阶段过滤器", value: "全部显示" },
      { name: "相位", value: "新构造" },
    ],
  },
];

/* Guides, one letter per depth: L line, T tee, E elbow, P/M plus or minus, Q/N the same at a branch's end. */
const tree: [string, string, React.ReactNode?][] = [
  ["LLT", "标高 1"], ["LLT", "标高 1 - 分析"], ["LLT", "标高 2"], ["LLE", "标高 2 - 分析"],
  ["LP", "三维视图"], ["LQ", "立面 (建筑立面)"],
  ["T", "图例", icon.legend], ["T", "明细表/数量", icon.sched], ["T", "图纸 (全部)", icon.sheet], ["M", "族", icon.family],
  ["LP", "分割轮廓"], ["LP", "场地"], ["LP", "坡道"], ["LP", "填充图案"], ["LP", "墙"], ["LP", "天花板"], ["LP", "屋顶"],
  ["LP", "幕墙嵌板"], ["LP", "幕墙竖梃"], ["LP", "幕墙系统"], ["LP", "栏杆扶手"], ["LP", "楼板"], ["LP", "楼梯"],
  ["LP", "注释符号"], ["LP", "电缆桥架"], ["LP", "窗"], ["LP", "管道"], ["LP", "管道系统"], ["LP", "线管"],
  ["LM", "结构基础"], ["LLM", "参数化大放脚基础"], ["LLLE", "参数化大放脚基础"], ["LLP", "基础底板"], ["LLP", "条形基础"],
  ["LLN", "独立基础"], ["LL T", "1800 x 1200 x 450m"], ["LL T", "2400 x 1800 x 450m"], ["LL E", "独立基础"],
  ["LP", "结构柱"], ["LP", "结构桁架"], ["LP", "结构框架"],
];

/* ---------- parts ---------- */

const Lines = ({ a, b }: { a: string; b?: string }) => (
  <BigLabel><span>{a}</span>{b && <span>{b}</span>}</BigLabel>
);

const PropValue = ({ row, id }: { row: Prop; id: string }) => {
  if (row.kind === "button") return <CellButton id={id}>{row.value}</CellButton>;
  if (row.kind === "check") return <Check type="checkbox" id={id} disabled={row.dim} />;
  if (row.kind === "input") return <CellInput id={id} defaultValue={row.value} />;
  return <>{row.value}</>;
};

const Sign = ({ plus }: { plus: boolean }) => (
  <svg width="14" height="7" viewBox="0 0 14 7"><path d={plus ? "M0 3.500h14M7 0v7" : "M0 3.500h14"} stroke="#3450a8" strokeWidth="2" /></svg>
);

const arrow = (
  <path d="M8 3l.200 11 2-2.200 2 4 1.800-.800-2-4h3z" fill="#fff" strokeWidth=".900" />
);
const redX = <path d="M9 0l6 5M15 0l-6 5" stroke="#c02a2a" strokeWidth="2" />;

const pickIcons: [string, React.ReactNode][] = [
  ["选择链接", <g key="a"><path d="M1 4q3-3 7 0 4 3 7 0M1 4q3 3 7 0 4-3 7 0" stroke="#d79a14" strokeWidth="1.800" />{arrow}</g>],
  ["选择基线图元", <g key="b"><path d="M7 2L1 8h7M1 12h7l-5-3" stroke="#3a6fb4" fill="#cfe0f4" />{arrow}{redX}</g>],
  ["选择锁定图元", <g key="c"><path d="M2 1h8v3L9 5l1 4H2l1-4-1-1zM6 9v6" stroke="#b04a20" fill="#f0a060" />{arrow}</g>],
  ["按面选择图元", <g key="d"><path d="M1 5l4-4v10l-4 4zM5 1h4M5 12h3" stroke="#2f6da8" fill="#a9d4f4" />{arrow}{redX}</g>],
  ["选择时拖曳图元", <g key="e"><path d="M0 5h9M4.500 1v8M3 2.500L4.500 1 6 2.500M3 7.500L4.500 9 6 7.500" strokeWidth="1.300" />{arrow}</g>],
];

export default function App() {
  return (
    <Window>
      <Global />
      <Header>
        <AppButton aria-label="应用程序菜单">{logo}<Caret w={18} h={8} /></AppButton>
        <TitleRow>
          <QuickBar>
            <Tool aria-label="打开">{icon.open}</Tool>
            <Tool aria-label="保存">{icon.save}</Tool>
            <Tool aria-label="同步">{icon.sync}</Tool>
            <Tool $w={26} aria-label="同步选项"><Caret /></Tool>
            <Tool aria-label="放弃">{icon.undo}</Tool>
            <Tool $w={26} aria-label="放弃列表"><Caret /></Tool>
            <Tool aria-label="重做">{icon.redo}</Tool>
            <Tool $w={26} aria-label="重做列表"><Caret /></Tool>
            <Divider />
            <Tool aria-label="测量">{icon.measure}</Tool>
            <Tool $w={26} aria-label="测量选项"><Caret /></Tool>
            <Tool aria-label="对齐尺寸标注">{icon.align}</Tool>
            <Tool aria-label="按类别标记">{icon.tag}</Tool>
            <Tool aria-label="文字"><Letter>A</Letter></Tool>
            <Divider />
            <Tool aria-label="默认三维视图">{icon.house}</Tool>
            <Tool $w={26} aria-label="三维视图选项"><Caret /></Tool>
            <Tool aria-label="剖面">{icon.section}</Tool>
            <Tool $w={53} $on aria-label="细线">{icon.thin}</Tool>
            <Divider />
            <Tool aria-label="关闭隐藏窗口">{icon.closeHidden}</Tool>
            <Tool aria-label="切换窗口">{icon.swap}</Tool>
            <Tool $w={26} aria-label="切换窗口列表"><Caret /></Tool>
            <Tool aria-label="编辑草图">{icon.sketch}</Tool>
            <Tool $w={32} aria-label="自定义">{icon.custom}</Tool>
          </QuickBar>
          <Title><span>Autodesk Revit 2016 -</span><span>基础 - 三维视图: {"{三维}"}</span></Title>
          <InfoBar>
            <Tool $w={28} aria-label="展开搜索"><svg width="10" height="14" viewBox="0 0 10 14"><path d="M1 0l9 7-9 7z" fill="#333" /></svg></Tool>
            <Search placeholder="键入关键字或短语" aria-label="搜索" />
            <Tool $w={52} aria-label="搜索">{icon.binoc}</Tool>
            <Tool $w={50} aria-label="通讯中心">{icon.dish}</Tool>
            <Tool $w={50} aria-label="收藏夹">{icon.star}</Tool>
            <Login>{icon.user}<span>登录</span></Login>
            <Tool $w={26} aria-label="登录选项"><Caret w={12} /></Tool>
            <Tool $w={58} aria-label="Exchange">{icon.x}</Tool>
            <Divider />
            <Tool $w={60} aria-label="帮助"><HelpDot>?</HelpDot></Tool>
            <Tool $w={21} aria-label="帮助选项"><Caret w={12} /></Tool>
          </InfoBar>
          <WindowButtons>
            <Tool $w={96} aria-label="最小化"><svg width="22" height="3"><rect width="22" height="3" fill="#999" /></svg></Tool>
            <Tool $w={96} aria-label="还原"><svg width="22" height="17" viewBox="0 0 22 17"><path d="M1 5h14v11H1zM6 4V1h15v11h-5" fill="none" stroke="#999" strokeWidth="2" /></svg></Tool>
            <Tool $w={96} aria-label="关闭"><Cross w={22} h={16} c="#999" s={2} /></Tool>
          </WindowButtons>
        </TitleRow>
        <Tabs>
          {tabs.map(([t, w]) => <Tab key={t} $w={w} $on={t === "插入"}>{t}</Tab>)}
          <TabFold aria-label="最小化功能区"><Pill><svg width="12" height="6"><path d="M0 6L6 0l6 6z" fill={INK} /></svg></Pill><Caret w={14} h={7} c="#111" /></TabFold>
        </Tabs>
      </Header>

      <Ribbon>
        <Panel $w={108}>
          <PanelBody><Big $w={82} $on>{ribbonIcon.arrow}<Lines a="修改" /></Big></PanelBody>
          <PanelTitle><TitleText>选择</TitleText><Caret w={20} h={8} /><Spacer $n={0.2} /></PanelTitle>
        </Panel>
        <Panel $w={606}>
          <PanelBody>
            <Big $w={82}>{ribbonIcon.rvt}<Lines a="链接" b="Revit" /></Big>
            <Big $w={82}>{ribbonIcon.ifc}<Lines a="链接" b="IFC" /></Big>
            <Big $w={84}>{ribbonIcon.cad}<Lines a="链接" b="CAD" /></Big>
            <Big $w={92}>{ribbonIcon.dwf}<Lines a="DWF" b="标记" /></Big>
            <Big $w={90}>{ribbonIcon.decal}<Lines a="贴花" /><Caret /></Big>
            <Big $w={88}>{ribbonIcon.cloud}<Lines a="点" b="云" /></Big>
            <Big $w={76}>{ribbonIcon.manage}<Lines a="管理" b="链接" /></Big>
          </PanelBody>
          <PanelTitle><TitleText>链接</TitleText></PanelTitle>
        </Panel>
        <Panel $w={474}>
          <PanelBody>
            <Big $w={86}>{ribbonIcon.importCad}<Lines a="导入" b="CAD" /></Big>
            <Big $w={92}>{ribbonIcon.gbxml}<Lines a="导入" b="gbXML" /></Big>
            <Big $w={127}>{ribbonIcon.file}<WithArrow><Lines a="从文件" b="插入" /><Caret /></WithArrow></Big>
            <Big $w={75} $dim>{ribbonIcon.image}<Lines a="图像" /></Big>
            <Big $w={84}>{ribbonIcon.manageImg}<Lines a="管理" b="图像" /></Big>
          </PanelBody>
          <PanelTitle>
            <TitleText>导入</TitleText>
            <Tool $w={30} aria-label="导入选项"><svg width="14" height="12" viewBox="0 0 14 12"><path d="M1 1l9 8M12 2v9H4" fill="none" stroke="#333" strokeWidth="2" /></svg></Tool>
          </PanelTitle>
        </Panel>
        <Panel $w={180}>
          <PanelBody>
            <Big $w={82}>{ribbonIcon.family}<Lines a="载入" b="族" /></Big>
            <Big $w={88}>{ribbonIcon.group}<Lines a="作为组" b="载入" /></Big>
          </PanelBody>
          <PanelTitle><TitleText>从库中载入</TitleText></PanelTitle>
        </Panel>
      </Ribbon>

      <OptionsBar />

      <Work>
        <Palette>
          <PaletteHead><span>属性</span><button aria-label="关闭属性"><Cross /></button></PaletteHead>
          <PaletteBox>
            <TypePicker>
              <Thumb>
                <svg width="62" height="38" viewBox="0 0 62 38">
                  <path d="M5 15v15l28 7 26-9V15L38 2 13 7z" fill="#cfd3d9" />
                  <path d="M5 15l9-7 19 14v15L5 30z" fill="#f8f9fa" />
                  <path d="M13 7L38 1l23 13-28 9z" fill="#e2e5ea" />
                  <path d="M1 15L13 7 38 1l23 13-28 9L14 8 1 15M5 15v15l28 7 26-9V15M33 22v15" fill="none" stroke={INK} strokeWidth="1.500" />
                  <path d="M12 21l9 2v10l-9-2z" fill="#3f4654" />
                </svg>
              </Thumb>
              <Grow>三维视图</Grow>
              <Caret w={18} h={6} />
            </TypePicker>
            <FilterRow>
              <Combo $w={284}><Select aria-label="图元筛选" defaultValue="v"><option value="v">三维视图: {"{三维}"}</option></Select><ThinDown /></Combo>
              <EditType>{icon.ctl}<span>编辑类型</span></EditType>
            </FilterRow>
            <Props>
              <colgroup><col width="231" /><col /></colgroup>
              <tbody>
                {groups.map((g, gi) => (
                  <React.Fragment key={g.title}>
                    <GroupRow><GroupCell colSpan={2}><Between>{g.title}<Fold /></Between></GroupCell></GroupRow>
                    {g.rows.map((r, ri) => (
                      <PropRow key={r.name} $dim={r.dim}>
                        <th scope="row"><label htmlFor={`p${gi}-${ri}`}>{r.name}</label></th>
                        <td><PropValue row={r} id={`p${gi}-${ri}`} /></td>
                      </PropRow>
                    ))}
                  </React.Fragment>
                ))}
              </tbody>
            </Props>
            <PropsFoot><HelpLink href="#help">属性帮助</HelpLink><Apply disabled>应用</Apply></PropsFoot>
          </PaletteBox>
        </Palette>

        <View>
          <Stage>
            <Drawing />
            <ViewButtons>
              <button aria-label="最小化视图"><svg width="28" height="18" viewBox="0 0 28 18"><rect x="1" y="10" width="26" height="5" fill="#fff" stroke="#444" strokeWidth="2" /></svg></button>
              <button aria-label="还原视图"><svg width="24" height="18" viewBox="0 0 24 18"><path d="M7 4V1h16v12h-4M1 5h17v12H1zM6 9h7v4H6z" fill="none" stroke="#444" strokeWidth="2" /></svg></button>
              <button aria-label="关闭视图"><svg width="26" height="18" viewBox="0 0 26 18"><path d="M2 3h6l5 4 5-4h6l-7 6.500 7 6.500h-6l-5-4-5 4H2l7-6.500z" fill="#fff" stroke="#444" strokeWidth="2" /></svg></button>
            </ViewButtons>
            <NavBar>
              <NavEnd aria-label="关闭导航栏"><svg width="17" height="11" viewBox="0 0 17 11"><ellipse cx="8.500" cy="5.500" rx="8.500" ry="5.500" fill="#aaa" /><path d="M5 3l7 5M12 3L5 8" stroke="#fff" strokeWidth="1.500" /></svg></NavEnd>
              <button aria-label="控制盘"><svg width="48" height="30" viewBox="0 0 48 30"><path d="M24 1h20q3 0 3 3v11c0 8-10 14-23 14S1 23 1 15 11 1 24 1z" fill="#e6e8ee" stroke="#8a8e98" strokeWidth="2" /><ellipse cx="24" cy="15" rx="12.500" ry="7.500" fill="#f4f4f6" stroke="#8a8e98" strokeWidth="2" /><path d="M14 20l-6 4M34 20l6 4" stroke="#8a8e98" strokeWidth="2" /></svg></button>
              <Caret w={11} h={4} c="#8a8e98" />
              <NavRule />
              <button aria-label="区域放大"><svg width="36" height="22" viewBox="0 0 36 22"><rect x="1" y="1" width="22" height="13" fill="#b9d3a4" stroke="#79a86c" strokeWidth="2" /><ellipse cx="23" cy="14" rx="7" ry="4.500" fill="#f4f6f6" stroke="#8a8e8e" strokeWidth="2" /><path d="M28 17l7 4" stroke="#8a8e8e" strokeWidth="3" /></svg></button>
              <Caret w={11} h={4} c="#8a8e98" />
              <NavEnd aria-label="导航栏选项"><svg width="17" height="11" viewBox="0 0 17 11"><ellipse cx="8.500" cy="5.500" rx="7.500" ry="4.500" fill="#ddd" stroke="#aaa" strokeWidth="2" /><path d="M4 5.500h9" stroke="#999" strokeWidth="1.500" /></svg></NavEnd>
            </NavBar>
          </Stage>
          <Track $v><Chev d="up" /><Spacer $n={503} /><Bar $w={31} $h={22} /><Spacer $n={505} /><Chev d="down" /></Track>
          <ViewBar>
            <Scale>{"1  :  100"}</Scale>
            {viewIcons.map(([n, v]) => <Tool key={n} $w={45} aria-label={n}><I16>{v}</I16></Tool>)}
            <Tool $w={28} aria-label="向左滚动"><Chev d="left" w={14} h={12} /></Tool>
            <Spacer $n={1104} /><Bar $w={37} $h={20} /><Spacer $n={1100} />
            <Tool $w={40} aria-label="向右滚动"><Chev d="right" w={14} h={12} /></Tool>
          </ViewBar>
          <Grip />
        </View>

        <Palette>
          <PaletteHead><span>项目浏览器 - 基础</span><button aria-label="关闭项目浏览器"><Cross /></button></PaletteHead>
          <PaletteBox>
            <BrowserGrid>
              <TreeClip>
                <Tree>
                  {tree.map(([guides, label, ic], i) => (
                    <TreeRow key={i}>
                      {guides.split("").map((k, j) => (
                        <Guide key={j} $kind={k} $first={j === 0}>
                          {"PMQN".includes(k) && <Toggle aria-label={`${label} 展开`}><Sign plus={"PQ".includes(k)} /></Toggle>}
                        </Guide>
                      ))}
                      {ic ? <TreeIcon>{ic}</TreeIcon> : <Stub />}
                      <TreeText $on={i === 37}>{label}</TreeText>
                    </TreeRow>
                  ))}
                </Tree>
              </TreeClip>
              <Track $v><Chev d="up" /><Spacer $n={56} /><Bar $w={32} $h={682} /><Spacer $n={277} /><Chev d="down" /></Track>
              <Track><Chev d="left" w={18} h={12} /><Spacer $n={1} /><Bar $w={326} $h={18} /><Spacer $n={4} /><Chev d="right" w={18} h={12} /></Track>
            </BrowserGrid>
          </PaletteBox>
        </Palette>
      </Work>

      <Status>
        <Hint>单击可进行选择; 按 Tab 键并单击可选择其他项目; 按 Ctrl 键并单击可将新项目添加到选择集; 按 Shift 键并单击可取消选择。</Hint>
        <Cluster>
          <Tool $w={55} aria-label="工作集"><I16 w={36}><path d="M1 7l4-4 4 3v8H1zM3 8v4M6 8v4" fill="#d5e8e2" /><path d="M8 6l3-4 4 4v8H9" fill="#a9dccf" stroke="#2c7f78" /><path d="M11 7v5M13 7v5" stroke="#2c7f78" /></I16></Tool>
          <Shelf><Combo $w={436} $plain><Select aria-label="活动工作集"><option> </option></Select><ThinDown /></Combo></Shelf>
          <Tool $w={72} aria-label="编辑请求"><I16 w={28}><path d="M2 3v11h7M4 12L12 3l3 2-7 8z" stroke="#8a8a8a" fill="#e0e0e0" /></I16></Tool>
          <Count>:0</Count>
          <Tool $w={78} aria-label="设计选项"><I16><rect x="1" y="2" width="14" height="12" fill="#f4f4f4" strokeWidth="1.500" /><path d="M1 4h14M3 7h4M3 10h4M9 7h4M9 10h4" strokeWidth="1.500" /></I16></Tool>
          <Tool $w={50} aria-label="排除选项"><I16 w={30}><rect x="2" y="3" width="12" height="10" fill="#9a9a9a" stroke="#8a8a8a" /></I16></Tool>
          <Shelf><Combo $w={334} $plain><Select $dim aria-label="主模型"><option>主模型</option></Select><ThinDown /></Combo></Shelf>
        </Cluster>
        <Cluster>
          {pickIcons.map(([n, g]) => <PickButton key={n} aria-label={n}><I16>{g}</I16></PickButton>)}
          <I16><path d="M1 2h14l-5 6v7l-4-1.500V8z" fill="#aab0b8" /><ellipse cx="8" cy="2.500" rx="7" ry="1.500" fill="#e6e8ec" /></I16>
          <Count>:0</Count>
        </Cluster>
      </Status>

      <Taskbar>
        <TaskGap $w={102} $c="#070707" />
        <TaskGap $w={734} $c="#f0f0f0" />
        <TaskGap $w={840} $c="#0b0b0b" />
        <TaskGap $w={105} $c="#2b2b2b" />
        <Clock>20:18</Clock>
      </Taskbar>
      <SideMeter><Meter /></SideMeter>
    </Window>
  );
}
